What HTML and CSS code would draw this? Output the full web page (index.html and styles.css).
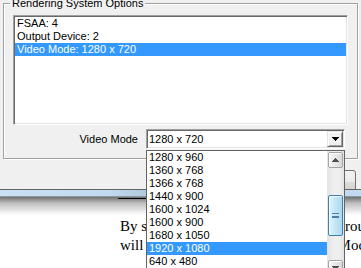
FILE: index.html
```html
<!DOCTYPE html>
<html lang="en">
<head>
  <meta charset="UTF-8" />
  <title>Rendering System Options</title>
  <link rel="stylesheet" href="styles.css">
</head>
<body>
<div class="dialog">
  <fieldset class="group">
    <legend>Rendering System Options</legend>
    <ul class="listbox">
      <li>FSAA: 4</li>
      <li>Output Device: 2</li>
      <li class="selected">Video Mode: 1280 x 720</li>
    </ul>
    <div class="option-row">
      <label>Video Mode</label>
      <div class="combo">
        <span class="combo-value">1280 x 720</span>
        <span class="combo-btn">
          <svg width="7" height="4" viewBox="0 0 7 4"><path d="M0 0h7v1h-1v1h-1v1h-1v1h-1v-1h-1v-1h-1v-1h-1z" fill="#000"/></svg>
        </span>
      </div>
    </div>
  </fieldset>
  <div class="buttons">
    <button class="btn">OK</button>
  </div>
</div>
<div class="frame-edge"></div>
<div class="page">
  <div class="peek"><span>Video Modes</span></div>
  <p>By selecting a suitable video mode through this list, you<br>will restart the display in this Video Mode</p>
</div>

<div class="dropdown">
  <ul class="options">
    <li>1280 x 960</li>
    <li>1360 x 768</li>
    <li>1366 x 768</li>
    <li>1440 x 900</li>
    <li>1600 x 1024</li>
    <li>1600 x 900</li>
    <li>1680 x 1050</li>
    <li class="selected">1920 x 1080</li>
    <li>640 x 480</li>
  </ul>
  <div class="scrollbar">
    <span class="scroll-btn">
      <svg width="7" height="4" viewBox="0 0 7 4"><path d="M3 0h1v1h1v1h1v1h1v1h-7v-1h1v-1h1v-1h1z" fill="#4d4d4d"/></svg>
    </span>
    <span class="thumb"><span class="grip"></span></span>
    <span class="scroll-btn down">
      <svg width="7" height="4" viewBox="0 0 7 4"><path d="M0 0h7v1h-1v1h-1v1h-1v1h-1v-1h-1v-1h-1v-1h-1z" fill="#4d4d4d"/></svg>
    </span>
  </div>
</div>
</body>
</html>
```

FILE: styles.css
```css
* {
  box-sizing: border-box;
}
body {
  margin: 0;
  width: 361px;
  height: 268px;
  overflow: hidden;
  position: relative;
  background: #fff;
  font-family: "Liberation Sans", Arial, sans-serif;
  font-size: 11px;
  color: #000;
}
.dialog {
  height: 192px;
  margin-top: -3px;
  padding: 0 0 0 3px;
  background: #f0f0f0;
  overflow: hidden;
}
.group {
  width: 355px;
  margin: 0;
  padding: 5px 9px 9px;
  border: 1px solid #a0a0a0;
  box-shadow: inset 1px 1px 0 #fff, 1px 1px 0 #fff;
}
.group legend {
  margin-left: -3px;
  padding: 0 2px;
  line-height: 13px;
}
.listbox {
  list-style: none;
  margin: 0;
  padding: 1px;
  height: 110px;
  background: #fff;
  border: 1px solid;
  border-color: #a0a0a0 #fff #fff #a0a0a0;
  box-shadow: inset 1px 1px 0 #696969, inset -1px -1px 0 #e3e3e3;
}
.listbox li,
.options li {
  height: 13px;
  line-height: 13px;
  padding-left: 2px;
  white-space: nowrap;
}
.selected {
  background: #3399ff;
  color: #fff;
}
.option-row {
  display: flex;
  align-items: center;
  justify-content: flex-end;
  gap: 8px;
  margin-top: 4px;
  padding-right: 3px;
}
.combo {
  width: 199px;
  height: 20px;
  display: flex;
  padding: 1px;
  background: #fff;
  border: 1px solid;
  border-color: #a0a0a0 #fff #fff #a0a0a0;
  box-shadow: inset 1px 1px 0 #696969, inset -1px -1px 0 #e3e3e3;
}
.combo-value {
  flex: 1;
  padding-left: 1px;
  line-height: 16px;
}
.combo-btn {
  width: 16px;
  height: 16px;
  display: flex;
  align-items: center;
  justify-content: center;
  background: #f0f0f0;
  border: 1px solid;
  border-color: #e3e3e3 #696969 #696969 #e3e3e3;
  box-shadow: inset 1px 1px 0 #fff, inset -1px -1px 0 #a0a0a0;
}
.buttons {
  display: flex;
  justify-content: flex-end;
  margin-top: 11px;
  padding-right: 5px;
}
.btn {
  width: 75px;
  height: 23px;
  border: 1px solid #707070;
  border-radius: 3px;
  background: linear-gradient(#f2f2f2, #ebebeb 50%, #dddddd 50%, #cfcfcf);
  font: inherit;
}
.frame-edge {
  height: 8px;
  border-top: 1px solid #646464;
  border-bottom: 1px solid #8a97a3;
  background: linear-gradient(to right, #cbe0f3, #c2d9ef 30%, #b3c9de 40%, #c2d9ef 45%);
}
.page {
  padding-left: 120px;
  background: linear-gradient(#707070, #bdbdbd 6px, #fff 18px) no-repeat;
  background-size: 100% 20px;
  font-family: "Liberation Serif", "Times New Roman", serif;
  font-size: 15px;
  line-height: 19px;
  white-space: nowrap;
}
.peek {
  height: 3px;
  margin-left: -2px;
  overflow: hidden;
  font-size: 11px;
}
.peek span {
  display: block;
  margin-top: -10px;
  line-height: 13px;
  text-decoration: underline;
}
.page p {
  margin: 17px 0 0;
}
.dropdown {
  position: absolute;
  left: 146px;
  top: 150px;
  width: 199px;
  height: 130px;
  display: flex;
  background: #fff;
  border: 1px solid #646464;
}
.options {
  list-style: none;
  margin: 0;
  padding: 0;
  flex: 1;
}
.scrollbar {
  width: 17px;
  display: flex;
  flex-direction: column;
  padding: 1px;
  background: linear-gradient(to right, #e2e2e2, #efefef 40%, #efefef 70%, #e2e2e2);
}
.scroll-btn {
  height: 16px;
  display: flex;
  align-items: center;
  justify-content: center;
  border: 1px solid #a5a5a5;
  border-radius: 2px;
  background: linear-gradient(to right, #f6f6f6, #e9e9e9 50%, #d8d8d8);
  box-shadow: inset 1px 1px 0 #fff;
}
.scroll-btn.down {
  margin-top: 24px;
}
.thumb {
  height: 41px;
  margin-top: 27px;
  display: flex;
  align-items: center;
  justify-content: center;
  border: 1px solid #3c7fb1;
  border-radius: 2px;
  background: linear-gradient(to right, #e3f4fc, #c4e5f6 50%, #a9d9f2);
  box-shadow: inset 1px 1px 0 #f2fafe;
}
.grip {
  width: 7px;
  height: 5px;
  border-top: 1px solid #4f7fa3;
  border-bottom: 1px solid #4f7fa3;
  background: linear-gradient(#c7e6f7 1px, #4f7fa3 1px, #4f7fa3 2px, #c7e6f7 2px);
  background-position: 0 1px;
  background-repeat: no-repeat;
}
```
